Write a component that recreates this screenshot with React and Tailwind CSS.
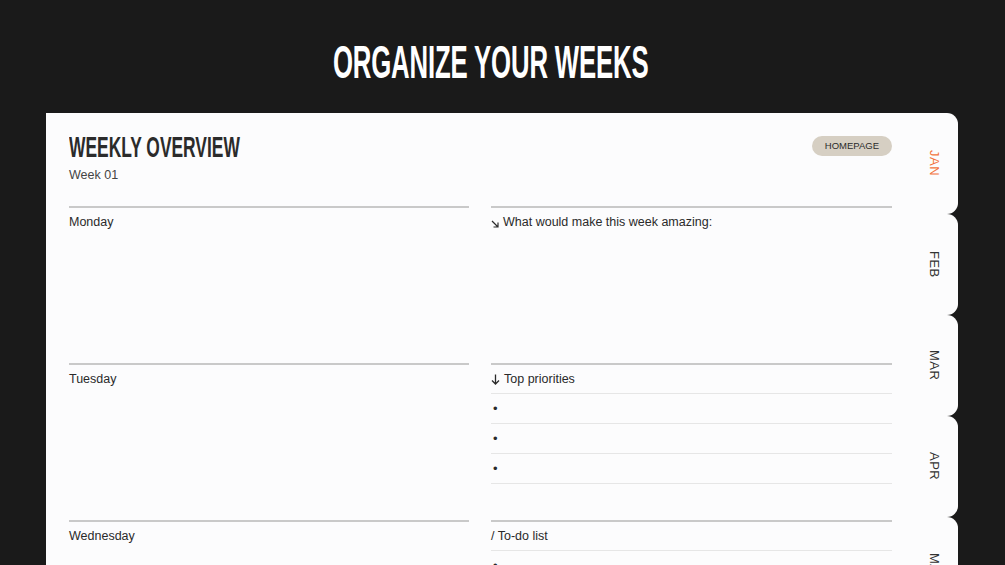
import React from "react";

const sans = { fontFamily: "'Liberation Sans', Arial, sans-serif" };

const months = ["JAN", "FEB", "MAR", "APR", "MAY"];

const ArrowDownRight = () => (
  <svg width="8" height="8" viewBox="0 0 8 8" className="mt-[3px]" fill="none" stroke="#2a2a2a" strokeWidth="1.2">
    <path d="M1 1 L7 7 M2.5 7 H7 V2.5" />
  </svg>
);

const ArrowDown = () => (
  <svg width="9" height="11" viewBox="0 0 9 11" fill="none" stroke="#2a2a2a" strokeWidth="1.3">
    <path d="M4.5 0.5 V10 M1 6.5 L4.5 10 L8 6.5" />
  </svg>
);

const Section = ({ label, icon, rows = 0 }) => (
  <div className="h-[157px] border-t-2 border-[#c9c9c9]">
    <div className="h-[28px] flex items-center gap-[4px] text-[12.5px] text-[#2a2a2a]">
      {icon}
      <span>{label}</span>
    </div>
    {rows > 0 && (
      <div className="border-t border-[#e6e6e6]">
        {Array.from({ length: rows }).map((_, i) => (
          <div key={i} className="h-[30px] flex items-center border-b border-[#e6e6e6] pl-[2px] text-[13px] text-[#2a2a2a]">
            •
          </div>
        ))}
      </div>
    )}
  </div>
);

export default function App() {
  return (
    <div className="h-[565px] w-[1005px] overflow-hidden bg-[#1a1a1a]" style={sans}>
      <div className="flex justify-center pt-[42px] pr-[24px] h-[113px]">
        <h1 className="inline-block scale-x-[0.56] text-white font-bold text-[46px] leading-[40px] tracking-[-0.3px] whitespace-nowrap">
          ORGANIZE YOUR WEEKS
        </h1>
      </div>
      <div className="ml-[46px] w-[912px] flex">
        <div className="w-[869px] bg-[#fcfcfd] px-[23px] pt-[19px]">
          <div className="flex items-start justify-between h-[74px]">
            <div>
              <h2 className="origin-left scale-x-[0.6] font-bold text-[29px] leading-[30px] text-[#2b2b2b] whitespace-nowrap">
                WEEKLY OVERVIEW
              </h2>
              <div className="mt-[4px] text-[12.5px] text-[#444]">Week 01</div>
            </div>
            <div className="mt-[4px] h-[20px] px-[13px] rounded-full bg-[#d6cfc3] flex items-center text-[9.5px] text-[#2b2b2b]">
              HOMEPAGE
            </div>
          </div>
          <div className="grid grid-cols-[400px_401px] gap-x-[22px]">
            <div>
              <Section label="Monday" />
              <Section label="Tuesday" />
              <Section label="Wednesday" />
            </div>
            <div>
              <Section label="What would make this week amazing:" icon={<ArrowDownRight />} />
              <Section label="Top priorities" icon={<ArrowDown />} rows={3} />
              <Section label="/ To-do list" rows={3} />
            </div>
          </div>
        </div>
        <div className="w-[43px] flex flex-col">
          {months.map((m, i) => (
            <div key={m} className="h-[101px] shrink-0 bg-[#fcfcfd] rounded-r-[11px] flex items-center justify-center pr-[4px]">
              <span
                className={`text-[13px] tracking-[0.5px] ${i === 0 ? "text-[#f2743f]" : "text-[#333]"}`}
                style={{ writingMode: "vertical-rl" }}
              >
                {m}
              </span>
            </div>
          ))}
        </div>
      </div>
    </div>
  );
}
